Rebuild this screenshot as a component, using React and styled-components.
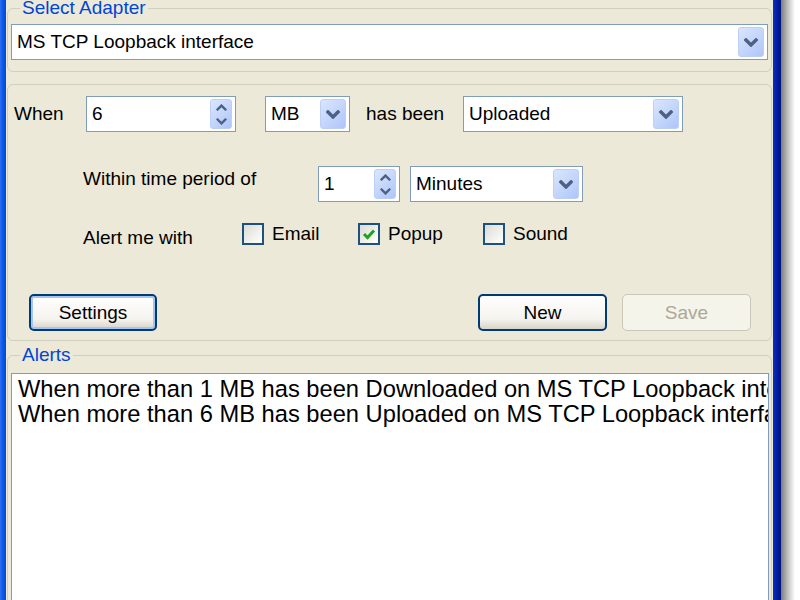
import React from "react";
import styled, { createGlobalStyle } from "styled-components";

const GlobalStyle = createGlobalStyle`
  html, body {
    margin: 0;
    padding: 0;
    background: #fff;
  }
  body {
    font-family: "Liberation Sans", Arial, sans-serif;
  }
`;

function Chevron({ up, small }) {
  const w = small ? 11 : 14;
  const h = small ? 7 : 9;
  return (
    <svg width={w} height={h} viewBox="0 0 14 9">
      <polyline
        points={up ? "2,7 7,2 12,7" : "2,2 7,7 12,2"}
        fill="none"
        stroke="#4d6185"
        strokeWidth={small ? 3 : 3.4}
        strokeLinecap="square"
      />
    </svg>
  );
}

function CheckMark() {
  return (
    <svg width="14" height="12" viewBox="0 0 14 12">
      <polyline
        points="2,6 5.5,9.5 12,2.5"
        fill="none"
        stroke="#21a121"
        strokeWidth="3"
      />
    </svg>
  );
}

function ComboBox({ width, value }) {
  return (
    <Combo $w={width}>
      <FieldText>{value}</FieldText>
      <DropButton>
        <Chevron />
      </DropButton>
    </Combo>
  );
}

function SpinBox({ width, value }) {
  return (
    <Combo $w={width}>
      <FieldText>{value}</FieldText>
      <SpinButtons>
        <SpinHalf>
          <Chevron up small />
        </SpinHalf>
        <SpinHalf>
          <Chevron small />
        </SpinHalf>
      </SpinButtons>
    </Combo>
  );
}

function CheckOption({ label, checked, width }) {
  return (
    <Option $w={width}>
      <Box>{checked && <CheckMark />}</Box>
      <span>{label}</span>
    </Option>
  );
}

function App() {
  return (
    <Screen>
      <GlobalStyle />
      <FrameLeft />
      <Body>
        <Group $pad="8px 2px 11px 3px">
          <Legend>Select Adapter</Legend>
          <ComboBox width={757} value="MS TCP Loopback interface" />
        </Group>

        <Group $mt={12} $pad="11px 2px 9px 3px">
          <Row $h={36}>
            <Label $w={72} $ml={3}>When</Label>
            <SpinBox width={150} value="6" />
            <Spacer $w={29} />
            <ComboBox width={85} value="MB" />
            <Label $w={97} $ml={16}>has been</Label>
            <ComboBox width={220} value="Uploaded" />
          </Row>
          <Row $h={36} $mt={34}>
            <Label $w={235} $ml={72} $pb={10}>Within time period of</Label>
            <SpinBox width={82} value="1" />
            <Spacer $w={10} />
            <ComboBox width={173} value="Minutes" />
          </Row>
          <Row $h={24} $mt={20}>
            <Label $w={159} $ml={72} $pt={8}>Alert me with</Label>
            <CheckOption width={116} label="Email" />
            <CheckOption width={125} label="Popup" checked />
            <CheckOption label="Sound" />
          </Row>
          <ButtonRow>
            <Button $w={128} $default>Settings</Button>
            <ButtonGroup>
              <Button>New</Button>
              <Button disabled>Save</Button>
            </ButtonGroup>
          </ButtonRow>
        </Group>

        <Group $mt={6} $pad="10px 2px 0 3px">
          <Legend>Alerts</Legend>
          <ListBox>
            <ListItem>When more than 1 MB has been Downloaded on MS TCP Loopback interface</ListItem>
            <ListItem>When more than 6 MB has been Uploaded on MS TCP Loopback interface</ListItem>
          </ListBox>
        </Group>
      </Body>
      <FrameRight />
      <Shadow />
    </Screen>
  );
}

const Screen = styled.div`
  display: flex;
  width: 800px;
  height: 600px;
  overflow: hidden;
  background: #fff;
`;

const FrameLeft = styled.div`
  width: 6px;
  flex-shrink: 0;
  background: linear-gradient(to right, #2d6ff2, #0b56e6 50%, #0747d4);
`;

const FrameRight = styled.div`
  width: 8px;
  flex-shrink: 0;
  background: linear-gradient(to right, #0a2fc4, #001a9c 60%, #00137e);
`;

const Shadow = styled.div`
  width: 14px;
  flex-shrink: 0;
  background: linear-gradient(to right, #7d7d7d, #c9c9c9 55%, #fff);
`;

const Body = styled.div`
  width: 767px;
  flex-shrink: 0;
  box-sizing: border-box;
  padding: 0 1px;
  background: #ece9d8;
  display: flex;
  flex-direction: column;
`;

const Group = styled.fieldset`
  margin: ${(p) => p.$mt || 0}px 0 0;
  padding: ${(p) => p.$pad};
  min-width: 0;
  border: 1px solid #d0d0bf;
  border-radius: 6px;
`;

const Legend = styled.legend`
  margin-left: 9px;
  padding: 0 2px;
  font-size: 19px;
  line-height: 16px;
  color: #0046d5;
`;

const Row = styled.div`
  display: flex;
  align-items: center;
  height: ${(p) => p.$h}px;
  margin-top: ${(p) => p.$mt || 0}px;
`;

const Label = styled.span`
  width: ${(p) => p.$w}px;
  margin-left: ${(p) => p.$ml || 0}px;
  padding-top: ${(p) => p.$pt || 0}px;
  padding-bottom: ${(p) => p.$pb || 0}px;
  flex-shrink: 0;
  font-size: 19px;
  color: #000;
  white-space: nowrap;
`;

const Spacer = styled.span`
  width: ${(p) => p.$w}px;
  flex-shrink: 0;
`;

const Combo = styled.div`
  display: flex;
  align-items: center;
  width: ${(p) => p.$w}px;
  height: 36px;
  flex-shrink: 0;
  box-sizing: border-box;
  padding: 2px 3px 2px 5px;
  border: 1px solid #7f9db9;
  background: #fff;
`;

const FieldText = styled.span`
  flex: 1;
  font-size: 19px;
  color: #000;
  white-space: nowrap;
  overflow: hidden;
`;

const DropButton = styled.div`
  width: 26px;
  height: 30px;
  box-sizing: border-box;
  border: 1px solid #bccff8;
  border-radius: 3px;
  background: linear-gradient(135deg, #dbe6fe, #c0d3fb 60%, #aec5f7);
  display: flex;
  align-items: center;
  justify-content: center;
`;

const SpinButtons = styled.div`
  width: 22px;
  height: 30px;
  display: flex;
  flex-direction: column;
  box-sizing: border-box;
  border: 1px solid #bccff8;
  border-radius: 3px;
  background: linear-gradient(135deg, #dbe6fe, #c0d3fb 60%, #aec5f7);
`;

const SpinHalf = styled.div`
  flex: 1;
  display: flex;
  align-items: center;
  justify-content: center;
`;

const Option = styled.label`
  display: flex;
  align-items: center;
  gap: 8px;
  width: ${(p) => (p.$w ? `${p.$w}px` : "auto")};
  flex-shrink: 0;
  font-size: 19px;
  color: #000;
`;

const Box = styled.span`
  width: 22px;
  height: 22px;
  box-sizing: border-box;
  border: 2px solid #1c5180;
  background: linear-gradient(135deg, #dcdcd5, #f4f4f1 70%, #fff);
  display: flex;
  align-items: center;
  justify-content: center;
`;

const ButtonRow = styled.div`
  display: flex;
  justify-content: space-between;
  margin-top: 48px;
  padding: 0 18px;
`;

const ButtonGroup = styled.div`
  display: flex;
  gap: 15px;
`;

const Button = styled.button`
  width: ${(p) => p.$w || 129}px;
  height: 37px;
  box-sizing: border-box;
  padding: 0;
  font-family: "Liberation Sans", Arial, sans-serif;
  font-size: 19px;
  color: ${(p) => (p.disabled ? "#aca899" : "#000")};
  border: ${(p) => (p.disabled ? "1px solid #c9c7ba" : "2px solid #003c74")};
  border-radius: 5px;
  background: ${(p) =>
    p.disabled
      ? "#f5f4ea"
      : "linear-gradient(#ffffff, #f4f3ee 70%, #d9d4c8)"};
  box-shadow: ${(p) =>
    p.$default ? "inset 0 0 0 2px #a6c4f2" : "none"};
`;

const ListBox = styled.div`
  height: 260px;
  box-sizing: border-box;
  padding: 3px 6px;
  border: 1px solid #7f9db9;
  background: #fff;
  overflow: hidden;
`;

const ListItem = styled.div`
  font-size: 23.7px;
  line-height: 25px;
  color: #000;
  white-space: nowrap;
`;

export default App;
